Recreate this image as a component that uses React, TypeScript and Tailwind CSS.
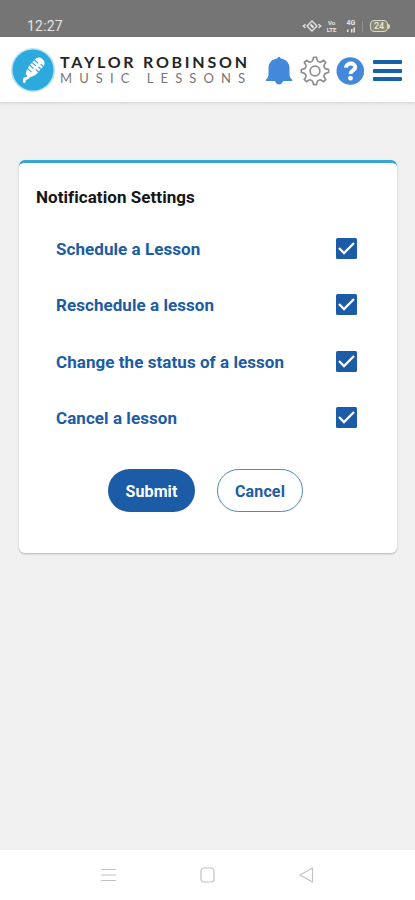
import React, { useState } from 'react';

const initialSettings = [
  { id: 'schedule', label: 'Schedule a Lesson' },
  { id: 'reschedule', label: 'Reschedule a lesson' },
  { id: 'status', label: 'Change the status of a lesson' },
  { id: 'cancel', label: 'Cancel a lesson' },
];

const StatusBar: React.FC = () => (
  <div className="flex h-[37px] items-start justify-between bg-[#757575] pl-[27px] pr-[25px] pt-[16px] text-[#e4e4e4]">
    <span className="text-[14px] leading-[20px] tracking-[0.2px]">12:27</span>
    <div className="flex h-[20px] items-center">
      {/* Vibrate */}
      <svg className="mr-[5px] h-[14px] w-[20px]" viewBox="0 0 20 14" fill="none" stroke="currentColor" strokeWidth="1.300">
        <path d="M3.500 5.200L1.200 7l2.300 1.800M16.500 5.200L18.800 7l-2.300 1.800M10 2L5 7l5 5 5-5z" />
        <path d="M8.500 5.500l3 3" strokeWidth="2.200" />
      </svg>
      <span className="mr-[10px] flex w-[9px] flex-col items-center text-[6px] font-bold leading-[7px]">
        <span>Vo</span>
        <span>LTE</span>
      </span>
      {/* 4G signal */}
      <span className="mr-[6px] flex w-[10px] flex-col items-center text-[7px] font-bold leading-[7px]">
        <span>4G</span>
        <svg className="h-[6px] w-[10px]" viewBox="0 0 10 6" fill="currentColor">
          <path d="M1 2.500h1.500V5H1zM5 2h1.500v3.500H5zM7.500.500H9v5H7.500z" />
        </svg>
      </span>
      <span className="mr-[7px] h-[11px] w-px bg-[#929292]" />
      <span className="flex h-[12px] w-[18px] items-center justify-center rounded-[4px] border border-[#d8d6c8] bg-[#8d8970] text-[9px] font-medium leading-[10px]">
        24
      </span>
      <span className="h-[5px] w-[2px] rounded-r-sm bg-[#d8d6c8]" />
    </div>
  </div>
);

const Logo: React.FC = () => (
  <div className="flex items-start">
    <svg className="h-[46px] w-[46px]" viewBox="0 0 46 46">
      <circle cx="23" cy="23" r="22" fill="#b5e3f5" />
      <circle cx="23" cy="23" r="20.500" fill="#2caade" />
      {/* Microphone */}
      <g transform="translate(25.500 20) rotate(42)" fill="#fff">
        <rect x="-5.500" y="-10.500" width="11" height="20" rx="5" />
        <path d="M-5.500-4.500h5M-5.500-1h5M-5.500 2.500h5M2-5.500h4M2-2h4M2 1.500h4" stroke="#2caade" strokeWidth="1.200" />
        <path d="M-4.500 8h9L2.500 12h-5z" />
        <path d="M-5.500 6.500h6" stroke="#2caade" strokeWidth="1.200" />
      </g>
      <path d="M19 29l-1.500 2-3 .800-.300 2.700" fill="none" stroke="#fff" strokeWidth="2.800" strokeLinecap="round" strokeLinejoin="round" />
    </svg>
    <div className="ml-[4px] w-[191px] pt-[7px] font-['Lato','Open_Sans',sans-serif]">
      <div className="whitespace-nowrap text-[16px] font-bold leading-[16px] tracking-[2.750px] text-[#252525]">TAYLOR ROBINSON</div>
      <div className="whitespace-nowrap text-[13px] leading-[16px] tracking-[7.080px] text-[#777]">MUSIC LESSONS</div>
    </div>
  </div>
);

const gearAngles = [0, 45, 90, 135, 180, 225, 270, 315];

const GearIcon: React.FC = () => (
  <svg className="ml-[7px] h-[30px] w-[30px]" viewBox="0 0 30 30" fill="none" stroke="#8e8e8e" strokeWidth="1.700" strokeLinejoin="round">
    {/* One tooth and its valley, repeated round the hub */}
    {gearAngles.map((angle) => (
      <path
        key={angle}
        transform={`rotate(${angle} 15 15)`}
        d="M11.170 5.760Q12.600 5.200 12.900 3.900L13.500 1.400H16.500L17.100 3.900Q17.400 5.200 18.830 5.760"
      />
    ))}
    <circle cx="15" cy="15" r="4.900" />
  </svg>
);

const Header: React.FC = () => (
  <header className="relative flex h-[65px] items-start bg-white pl-[10px] pt-[10px] shadow-[0_1px_3px_rgba(0,0,0,0.14)]">
    <Logo />
    <div className="ml-[14px] flex pt-[9px]">
      <svg className="h-[29px] w-[28px]" viewBox="0 0 28 29" fill="#4389d9">
        <path d="M12.300 2.500C12.300.500 15.700.500 15.700 2.500C21.500 3.300 24.500 7 24.500 12.500V18c0 2.800 1 4.600 2.700 5.700v1.300H.800v-1.300C2.500 22.600 3.500 20.800 3.500 18v-5.500c0-5.500 3-9.200 8.800-10z" />
        <path d="M10 24.500h8c-.300 5.300-7.700 5.300-8 0z" />
      </svg>
      <GearIcon />
      <svg className="ml-[6px] h-[30px] w-[29px]" viewBox="0 0 29 30">
        <circle cx="14.300" cy="15" r="13.800" fill="#4389d9" />
        <path d="M9.900 11.600C10.500 6.300 19.200 6.300 19.200 11.300c0 3.500-4.700 3.300-4.700 6.600" fill="none" stroke="#fff" strokeWidth="4" />
        <circle cx="14.500" cy="22.200" r="2.400" fill="#fff" />
      </svg>
      <div className="ml-[8px] flex w-[29px] flex-col gap-[4.500px] pt-[4px]">
        <span className="h-[4px] rounded-[1px] bg-[#1463aa]" />
        <span className="h-[4px] rounded-[1px] bg-[#1463aa]" />
        <span className="h-[4px] rounded-[1px] bg-[#1463aa]" />
      </div>
    </div>
  </header>
);

const App: React.FC = () => {
  const [checked, setChecked] = useState<Record<string, boolean>>({
    schedule: true,
    reschedule: true,
    status: true,
    cancel: true,
  });

  return (
    <div className="flex h-[900px] w-[415px] flex-col overflow-hidden bg-[#f0f0f0] font-['Roboto',sans-serif]">
      <StatusBar />
      <Header />

      <main className="flex-1 pl-[19px] pr-[18px] pt-[58px]">
        <section className="h-[393px] rounded-[6px] border-t-[3px] border-[#38a5d2] bg-white pt-[24px] shadow-[0_1px_2px_rgba(0,0,0,0.25)]">
          <h1 className="pl-[17px] text-[17px] font-bold leading-[20px] tracking-[0.060px] text-[#161616]">Notification Settings</h1>

          <div className="mt-[13px] pl-[37px] pr-[40px]">
            {initialSettings.map((item) => (
              <label key={item.id} className="flex h-[56.500px] items-center justify-between">
                <span className="pt-px text-[17px] font-bold leading-[20px] tracking-[0.060px] text-[#1c5ca3]">{item.label}</span>
                <input
                  type="checkbox"
                  className="sr-only"
                  checked={checked[item.id]}
                  onChange={() => setChecked({ ...checked, [item.id]: !checked[item.id] })}
                />
                <svg className="mb-[0.500px] h-[21px] w-[21px]" viewBox="0 0 21 21">
                  <rect width="21" height="21" rx="1.500" fill="#1c5ba6" />
                  {checked[item.id] && (
                    <path d="M3 10l5 5L18 5" fill="none" stroke="#fff" strokeWidth="2.300" />
                  )}
                </svg>
              </label>
            ))}
          </div>

          <div className="mt-[23px] flex pl-[89px]">
            <button className="h-[43px] w-[87px] rounded-full bg-[#1c5ba6] pt-[2px] text-[16px] font-bold tracking-[0.100px] text-white">Submit</button>
            <button className="ml-[22px] h-[43px] w-[86px] rounded-full border border-[#4d8ba8] pt-[2px] text-[16px] font-bold tracking-[0.150px] text-[#1c5ca3]">
              Cancel
            </button>
          </div>
        </section>
      </main>

      {/* Android navigation */}
      <nav className="flex h-[50px] items-center bg-white pl-[101px] text-[#c2c2c2]">
        <svg className="h-[16px] w-[15px]" viewBox="0 0 15 16" stroke="currentColor" strokeWidth="1.200">
          <path d="M0 2.500h15M0 8h15M0 13.500h15" />
        </svg>
        <svg className="ml-[84px] h-[16px] w-[15px]" viewBox="0 0 15 16" fill="none" stroke="currentColor" strokeWidth="1.200">
          <rect x="1" y="1" width="13" height="14" rx="3" />
        </svg>
        <svg className="ml-[84px] h-[16px] w-[15px]" viewBox="0 0 15 16" fill="none" stroke="currentColor" strokeWidth="1.200" strokeLinejoin="round">
          <path d="M13.500 1v14L1 8z" />
        </svg>
      </nav>
    </div>
  );
};

export default App;
